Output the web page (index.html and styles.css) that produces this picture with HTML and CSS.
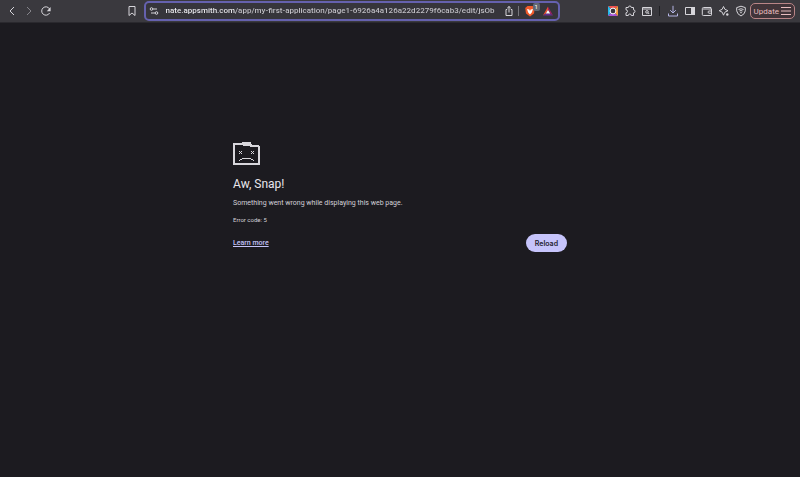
FILE: index.html
```html
<!DOCTYPE html>
<html lang="en">
<head>
<meta charset="utf-8">
<title>Aw, Snap!</title>
<link rel="stylesheet" href="styles.css">
</head>
<body>
<header class="toolbar">
  <nav class="history" aria-label="History">
    <button class="tool" aria-label="Back"><svg viewBox="0 0 12 12"><path d="M8 2 4 6l4 4"/></svg></button>
    <button class="tool dim" aria-label="Forward" disabled><svg viewBox="0 0 12 12"><path d="M4 2l4 4-4 4"/></svg></button>
    <button class="tool" aria-label="Refresh"><svg viewBox="0 0 12 12"><path d="M9.600 8A4.200 4.200 0 1 1 9.600 4"/><path class="solid" d="M10.600 2v4.200H6.800z"/></svg></button>
  </nav>
  <button class="tool" aria-label="Bookmark"><svg viewBox="0 0 12 12"><path d="M3 1.500h6v9L6 8l-3 2.500z"/></svg></button>
  <form class="address">
    <button type="button" class="tool" aria-label="Site settings"><svg viewBox="0 0 12 12"><path d="M5 4h4M3 8h4"/><circle cx="3.500" cy="4" r="1.300"/><circle cx="8.500" cy="8" r="1.300"/></svg></button>
    <input class="url" type="text" aria-label="Address" value="nate.appsmith.com/app/my-first-application/page1-6926a4a126a22d2279f6cab3/edit/jsOb">
    <button type="button" class="tool" aria-label="Share"><svg viewBox="0 0 12 12"><path d="M4.200 4.500H3v6h6v-6H7.800M6 7.500v-6M4.200 3.200 6 1.500l1.800 1.700"/></svg></button>
    <span class="divider"></span>
    <button type="button" class="tool shield" aria-label="Shields"><svg viewBox="0 0 12 12"><path class="lion" d="M3.500 1h5l2.300 2-.8 5.500L6 11.500 2 8.500 1.200 3z"/><path class="mane" d="m3 4 2.300.5.7 1.500.7-1.500L9 4 7.800 7.500 6 9.500 4.200 7.500z"/></svg><span class="badge">1</span></button>
    <button type="button" class="tool" aria-label="Rewards"><svg viewBox="0 0 12 12"><path class="bat-left" d="M6 1.500 6 5 3.800 8.500 1 10.500z"/><path class="bat-right" d="M6 1.500 11 10.500 8.200 8.500 6 5z"/><path class="bat-base" d="M1 10.500h10L8.200 8.500H3.800z"/><path class="bat-core" d="M6 5 8.200 8.500H3.800z"/></svg></button>
  </form>
  <div class="extensions">
    <button class="tool" aria-label="Colour extension"><svg class="swatch" viewBox="0 0 12 12"><path class="c-red" d="M6 6 1 1h10z"/><path class="c-blue" d="M6 6 1 1v10z"/><path class="c-violet" d="M6 6 1 11h10z"/><path class="c-orange" d="M6 6 11 1v10z"/><circle class="lens" cx="6" cy="6" r="2.900"/></svg></button>
    <button class="tool" aria-label="Extensions"><svg viewBox="0 0 12 12"><path d="M2 2.500h2.300a1.500 1.500 0 0 1 3 0H9.500v2.300a1.500 1.500 0 0 1 0 3v2.700H7.300a1.500 1.500 0 0 0-3 0H2V7.800a1.500 1.500 0 0 0 0-3z"/></svg></button>
    <button class="tool" aria-label="Search tabs"><svg viewBox="0 0 12 12"><path d="M1.500 2.500h9v8h-9zM1.500 4h9M7 7.800 8.200 9"/><circle cx="6" cy="6.900" r="1.300"/></svg></button>
  </div>
  <span class="divider dark"></span>
  <div class="actions">
    <button class="tool download" aria-label="Downloads"><svg viewBox="0 0 12 12"><path d="M6 .8v7M3.200 5.200 6 8l2.800-2.800M1.500 8.500v2.500h9V8.500"/></svg></button>
    <button class="tool" aria-label="Sidebar"><svg viewBox="0 0 12 12"><path d="M1.500 2.500h9v7h-9z"/><path class="solid" d="M7 2h4v8H7z"/></svg></button>
    <button class="tool" aria-label="Wallet"><svg viewBox="0 0 12 12"><path d="M10 4V2.500H2.500q-1.200 0-1.200 1.200v5.800q0 1 1 1h7.500q.7 0 .7-.7V4H2M10.500 6H8q-.8 0-.8.8v.6q0 .8.8.8h2.500"/></svg></button>
    <button class="tool" aria-label="Assistant"><svg viewBox="0 0 12 12"><path d="M5.500 1.500q.5 3.500 4.500 4.200-4 .7-4.500 4.500Q5 6.400 1.200 5.700 5 5 5.500 1.500z"/><circle class="solid" cx="9.300" cy="9.500" r="1.200"/></svg></button>
    <button class="tool" aria-label="VPN"><svg viewBox="0 0 12 12"><path d="M6 1.200 10.300 2.600v3.200Q10 9 6 11 2 9 1.700 5.800V2.600zM3.500 4.500q2.500-1.500 5 0M4.500 6q1.500-1 3 0"/><circle class="solid" cx="6" cy="7.600" r=".8"/></svg></button>
  </div>
  <button class="update">Update<svg viewBox="0 0 10 8"><path d="M0 .5h10M0 4h10M0 7.500h10"/></svg></button>
</header>
<main class="crash">
  <svg class="folder" viewBox="0 0 27 23" aria-hidden="true"><path class="face" fill-rule="evenodd" d="M0 1H9V0H18V2H19V3H26V4H27V23H0zM2 3V21H25V5H17V4H10V3z"/><path class="face" d="M6 9h1v1H6zM8 9h1v1H8zM7 10h1v1H7zM6 11h1v1H6zM8 11h1v1H8zM18 9h1v1h-1zM20 9h1v1h-1zM19 10h1v1h-1zM18 11h1v1h-1zM20 11h1v1h-1zM9 16h9v1H9zM7 17h2v1H7zM18 17h2v1h-2zM6 18h1v1H6zM20 18h1v1h-1z"/></svg>
  <h1>Aw, Snap!</h1>
  <p class="message">Something went wrong while displaying this web page.</p>
  <p class="code">Error code: 5</p>
  <div class="row">
    <a href="#help">Learn more</a>
    <button class="reload">Reload</button>
  </div>
</main>
</body>
</html>
```

FILE: styles.css
```css
* { box-sizing: border-box; }
body {
  margin: 0;
  min-height: 100vh;
  background: #1c1b20;
  color: #e8e6ec;
  font-family: Roboto, Inter, sans-serif;
}
button { font: inherit; padding: 0; border: 0; background: none; color: inherit; }
.toolbar {
  display: flex;
  align-items: center;
  height: 23px;
  padding: 0 5px 0 6px;
  background: #3a393e;
  border-bottom: 1px solid #2a292e;
  color: #d6d5da;
}
.history { display: flex; gap: 5px; flex: 1; }
.tool { position: relative; width: 12px; height: 12px; flex: none; }
.tool svg { display: block; width: 12px; height: 12px; }
.tool path, .tool circle { fill: none; stroke: currentColor; stroke-width: 1; }
.tool .solid { fill: currentColor; stroke: none; }
.dim { color: #85848a; }
.address {
  display: flex;
  align-items: center;
  flex: none;
  width: 52vw;
  height: 20px;
  margin-left: 6px;
  padding: 0 4px 0 2px;
  border: 2px solid #6561ae;
  border-radius: 5px;
  background: #36353b;
}
.url {
  flex: 1;
  min-width: 0;
  margin: 0 5px 0 6px;
  padding: 0;
  border: 0;
  outline: 0;
  font: 500 8px/14px Roboto, Inter, sans-serif;
  color: transparent;
  background: linear-gradient(90deg, #f2f2f6 70px, #c5c4ca 70px);
  background-clip: text;
}
.divider { width: 1px; height: 10px; margin: 0 5px 0 3px; background: #77767c; }
.divider.dark { margin: 0 7px 0 6px; background: #202024; }
.shield { margin-right: 6px; }
.tool .lion { fill: #f15a2b; stroke: none; }
.tool .mane { fill: #fff; stroke: none; }
.badge {
  position: absolute;
  top: -2px;
  right: -4px;
  width: 7px;
  height: 8px;
  border-radius: 2px;
  background: #626873;
  color: #fff;
  font-size: 6px;
  line-height: 8px;
  text-align: center;
}
.tool .bat-left { fill: #f0502e; stroke: none; }
.tool .bat-right { fill: #9e1f63; stroke: none; }
.tool .bat-base { fill: #682d91; stroke: none; }
.tool .bat-core { fill: #fff; stroke: none; }
.tool .c-red { fill: #f0524e; stroke: none; }
.tool .c-blue { fill: #24b9ea; stroke: none; }
.tool .c-violet { fill: #a755d5; stroke: none; }
.tool .c-orange { fill: #f59a3c; stroke: none; }
.tool .lens { fill: #34333a; stroke: #fff; }
.swatch { border-radius: 3px; }
.extensions, .actions { display: flex; gap: 5px; }
.extensions { margin-left: 47px; }
.download { color: #b4b5e4; }
.update {
  display: flex;
  align-items: center;
  gap: 2px;
  height: 16px;
  margin-left: 3px;
  padding: 0 3px;
  border: 1px solid #b98587;
  border-radius: 5px;
  background: #413439;
  color: #e8bdbf;
  font-size: 8px;
}
.update svg { width: 10px; height: 8px; stroke: currentColor; }
.crash { width: 90%; max-width: 334px; margin: 0 auto; padding-top: 119px; }
.folder { display: block; width: 27px; height: 23px; }
.folder .face { fill: #d8d7dc; }
h1 { margin: 11px 0 0; font-size: 12px; line-height: 16px; font-weight: 400; }
p { margin: 0; color: #d3d1d8; }
.message { margin-top: 6px; font-size: 7px; line-height: 10px; }
.code { margin-top: 8px; font-size: 6px; line-height: 8px; }
.row { display: flex; align-items: center; justify-content: space-between; margin-top: 10px; font-size: 7px; }
.row a { color: #c4c3f8; font-weight: 500; }
.reload {
  height: 18px;
  padding: 0 9px;
  border-radius: 9px;
  background: #c6c4fb;
  color: #24222f;
  font-family: Inter, Roboto, sans-serif;
  font-weight: 600;
}
```
